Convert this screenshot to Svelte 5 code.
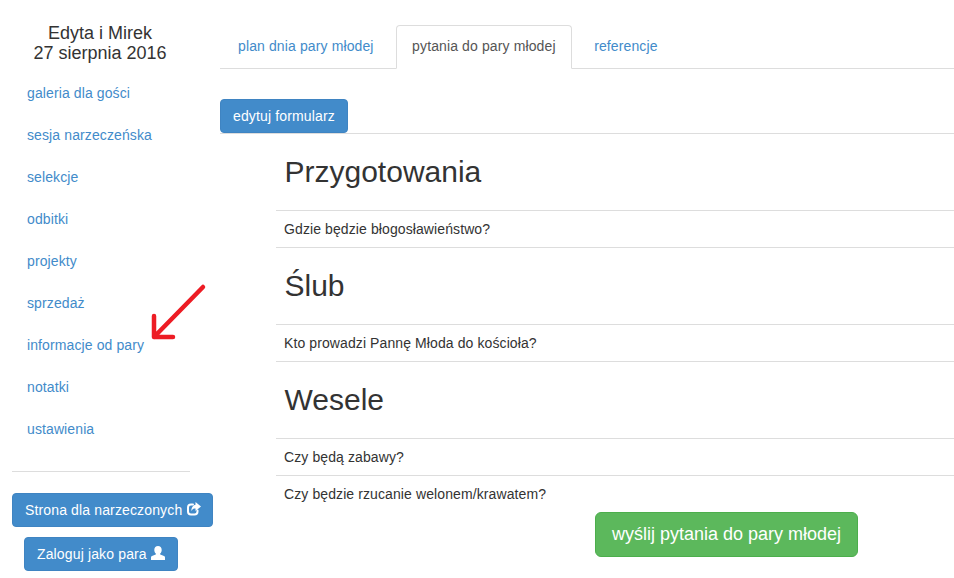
<script>
  const nav = ['galeria dla gości','sesja narzeczeńska','selekcje','odbitki','projekty','sprzedaż','informacje od pary','notatki','ustawienia'];
  const sections = [
    { title: 'Przygotowania', questions: ['Gdzie będzie błogosławieństwo?'] },
    { title: 'Ślub', questions: ['Kto prowadzi Pannę Młoda do kościoła?'] },
    { title: 'Wesele', questions: ['Czy będą zabawy?', 'Czy będzie rzucanie welonem/krawatem?'] }
  ];
</script>

<div class="page">
  <aside class="side">
    <h4 class="who">Edyta i Mirek<br />27 sierpnia 2016</h4>
    <nav class="menu">
      {#each nav as item}
        <a href="#top" class="menu-item">{item}</a>
      {/each}
    </nav>
    <hr class="rule" />
    <div class="side-btns">
      <button class="btn strona">Strona dla narzeczonych
        <svg class="ic share" viewBox="0 0 14 15" width="14" height="15"><path fill="none" stroke="#fff" stroke-width="2" stroke-linecap="round" d="M6 3.500H4A3 3 0 0 0 1 6.500V10.500A3 3 0 0 0 4 13.500H7.500A3 3 0 0 0 10.500 10.500V9.500"/><path fill="#fff" d="M8.500 1 14 5.500 8.500 10V7.500C6.500 7.500 5.200 8.300 4.300 10 4.300 6.800 6 4 8.500 3.800z"/></svg>
      </button>
      <button class="btn para">Zaloguj jako para
        <svg class="ic person" viewBox="0 0 14 14" width="14" height="14"><path fill="#fff" d="M7 0c2.200 0 3.700 1.600 3.700 3.900 0 1.500-.6 2.800-1.500 3.600-.3.300-.3.800.1 1L13 10c.7.300 1 .8 1 1.400V14H0v-2.600c0-.6.300-1.100 1-1.400l3.700-1.500c.4-.2.400-.7.100-1C3.900 6.700 3.300 5.400 3.300 3.900 3.300 1.600 4.800 0 7 0z"/></svg>
      </button>
    </div>
  </aside>

  <main class="main">
    <ul class="tabs">
      <li class="tab"><a href="#top">plan dnia pary młodej</a></li>
      <li class="tab active"><a href="#top">pytania do pary młodej</a></li>
      <li class="tab"><a href="#top">referencje</a></li>
    </ul>
    <div class="toolbar"><button class="btn edit">edytuj formularz</button></div>
    <div class="form">
      {#each sections as s, si}
        <h1 class="title">{s.title}</h1>
        {#each s.questions as q, qi}
          <div class="question" class:last={si === sections.length - 1 && qi === s.questions.length - 1}>{q}</div>
        {/each}
      {/each}
      <div class="send"><button class="btn-send">wyślij pytania do pary młodej</button></div>
    </div>
  </main>

  <svg class="arrow" viewBox="0 0 60 60" width="60" height="60" aria-hidden="true">
    <path d="M53 4 4 54M4 33 4 54 23 54" fill="none" stroke="#ed1c24" stroke-width="4.500" stroke-linecap="round" stroke-linejoin="round"/>
  </svg>
</div>

<style>
  :global(body) {
    margin: 0;
    background: #fff;
    font-family: "Liberation Sans", Arial, sans-serif;
    font-size: 14px;
    line-height: 20px;
    color: #333;
  }
  .page {
    position: relative;
    display: flex;
    width: 954px;
    height: 578px;
    overflow: hidden;
  }
  .side {
    width: 220px;
    flex: none;
    box-sizing: border-box;
    padding-top: 23px;
  }
  .who {
    width: 200px;
    margin: 0 0 10px;
    text-align: center;
    font-size: 18px;
    font-weight: 400;
    line-height: 20px;
  }
  .menu {
    display: flex;
    flex-direction: column;
  }
  .menu-item {
    height: 42px;
    box-sizing: border-box;
    padding: 10px 15px 12px 27px;
    color: #428bca;
    letter-spacing: .11px;
    text-decoration: none;
  }
  .rule {
    width: 178px;
    height: 1px;
    margin: 20px 0 21px 12px;
    border: 0;
    background: #ddd;
  }
  .side-btns {
    display: flex;
    flex-direction: column;
    align-items: flex-start;
    gap: 10px;
  }
  .btn {
    display: inline-flex;
    align-items: center;
    justify-content: flex-start;
    gap: 4px;
    height: 34px;
    box-sizing: border-box;
    padding: 0 12px;
    border: 1px solid #3f84c2;
    border-radius: 4px;
    background: #428bca;
    color: #fff;
    font: 14px/20px "Liberation Sans", Arial, sans-serif;
    letter-spacing: .14px;
    white-space: nowrap;
  }
  .strona { margin-left: 12px; width: 201px; }
  .para { margin-left: 24px; width: 154px; }
  .ic { flex: none; }
  .share { margin: -3px 0 0 1px; }
  .person { margin-top: -2px; }
  .main {
    flex: 1;
    min-width: 0;
  }
  .tabs {
    display: flex;
    height: 69px;
    box-sizing: border-box;
    margin: 0;
    padding: 25px 0 0 2px;
    list-style: none;
    border-bottom: 1px solid #ddd;
  }
  .tab {
    height: 44px;
    margin-right: 6px;
  }
  .tab a {
    display: block;
    box-sizing: border-box;
    height: 44px;
    padding: 10px 15px;
    border: 1px solid transparent;
    border-radius: 4px 4px 0 0;
    color: #428bca;
    letter-spacing: .12px;
    text-decoration: none;
  }
  .tab.active a {
    padding: 10px 15.500px;
    color: #555;
    background: #fff;
    border-color: #ddd #ddd #fff;
  }
  .toolbar {
    display: flex;
    margin-top: 30px;
    height: 35px;
    box-sizing: border-box;
    border-bottom: 1px solid #ddd;
  }
  .edit { width: 128px; flex: none; }
  .form {
    margin-left: 56px;
  }
  .title {
    height: 77px;
    box-sizing: border-box;
    margin: 0;
    padding: 21px 0 0 8.500px;
    font-size: 30px;
    line-height: 33px;
    font-weight: 400;
    color: #333;
    border-bottom: 1px solid #ddd;
  }
  .question {
    height: 37px;
    box-sizing: border-box;
    padding: 8px 0 0 8px;
    font-size: 14px;
    letter-spacing: .1px;
    border-bottom: 1px solid #ddd;
  }
  .question.last { height: 36px; border-bottom: 0; }
  .send {
    display: flex;
    margin: 0 0 0 319px;
  }
  .btn-send {
    width: 263px;
    height: 45px;
    border: 1px solid #4cae4c;
    border-radius: 6px;
    background: #5cb85c;
    color: #fff;
    font: 18px/24px "Liberation Sans", Arial, sans-serif;
    white-space: nowrap;
    padding: 0 0 2px;
  }
  .arrow {
    position: absolute;
    left: 150px;
    top: 283px;
  }
</style>
